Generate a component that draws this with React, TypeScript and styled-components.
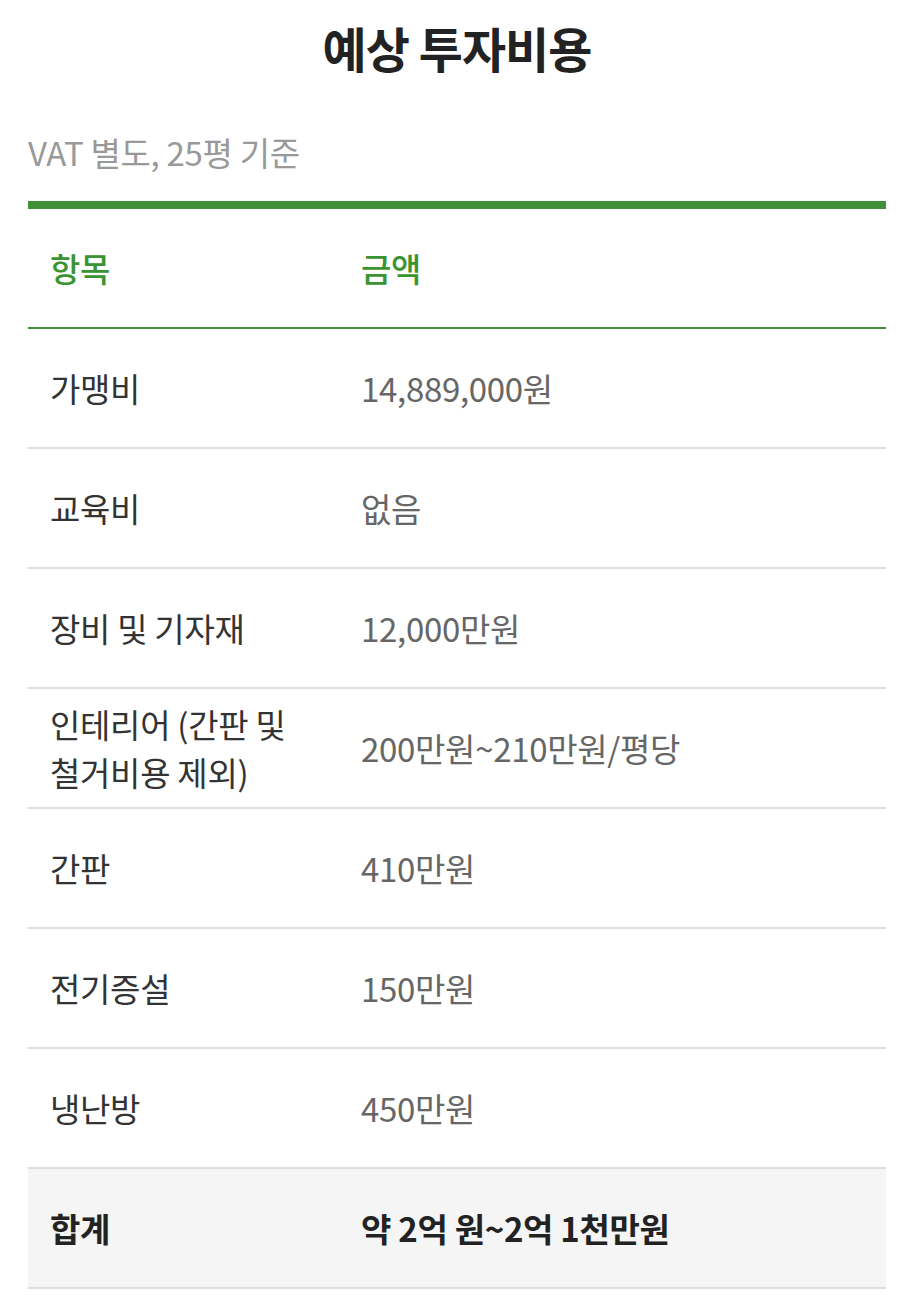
import styled, { createGlobalStyle } from 'styled-components';

const GlobalStyle = createGlobalStyle`
    body {
        margin: 0;
        background: #fff;
        font-family: "Noto Sans CJK KR", "Noto Sans", sans-serif;
    }
`;

const Page = styled.div`
    padding: 0 23px 0 28px;
`;

const Title = styled.h2`
    margin: 0;
    padding-top: 14px;
    font-size: 48px;
    line-height: 66px;
    font-weight: 700;
    color: #222;
    text-align: center;
    letter-spacing: -1px;
`;

const Note = styled.p`
    margin: 48px 0 0;
    font-size: 33px;
    line-height: 48px;
    color: #999;
    letter-spacing: -0.3px;
`;

const Table = styled.div`
    margin-top: 25px;
    border-top: 8px solid #3f9137;
`;

const Row = styled.div<{ $head?: boolean; $total?: boolean }>`
    display: grid;
    grid-template-columns: 311px 1fr;
    min-height: 118px;
    border-bottom: 2px solid ${p => (p.$head ? '#3f9137' : '#dedede')};
    background: ${p => (p.$total ? '#f5f5f5' : 'transparent')};
`;

const Cell = styled.div<{ $tone: 'head' | 'label' | 'value' | 'total' }>`
    display: flex;
    align-items: center;
    padding: 0 22px;
    font-size: 33px;
    line-height: 48px;
    letter-spacing: -0.3px;
    word-break: keep-all;
    font-weight: ${p => (p.$tone === 'head' ? 500 : p.$tone === 'total' ? 700 : 400)};
    color: ${p =>
        p.$tone === 'head' ? '#3a9431' : p.$tone === 'value' ? '#666' : p.$tone === 'total' ? '#222' : '#333'};
`;

const rows: [string, string][] = [
    ['가맹비', '14,889,000원'],
    ['교육비', '없음'],
    ['장비 및 기자재', '12,000만원'],
    ['인테리어 (간판 및 철거비용 제외)', '200만원~210만원/평당'],
    ['간판', '410만원'],
    ['전기증설', '150만원'],
    ['냉난방', '450만원'],
];

const App = () => {
    return (
        <Page>
            <GlobalStyle />
            <Title>예상 투자비용</Title>
            <Note>VAT 별도, 25평 기준</Note>
            <Table>
                <Row $head>
                    <Cell $tone="head">항목</Cell>
                    <Cell $tone="head">금액</Cell>
                </Row>
                {rows.map(([label, value]) => (
                    <Row key={label}>
                        <Cell $tone="label">{label}</Cell>
                        <Cell $tone="value">{value}</Cell>
                    </Row>
                ))}
                <Row $total>
                    <Cell $tone="total">합계</Cell>
                    <Cell $tone="total">약 2억 원~2억 1천만원</Cell>
                </Row>
            </Table>
        </Page>
    )
}

export default App;
